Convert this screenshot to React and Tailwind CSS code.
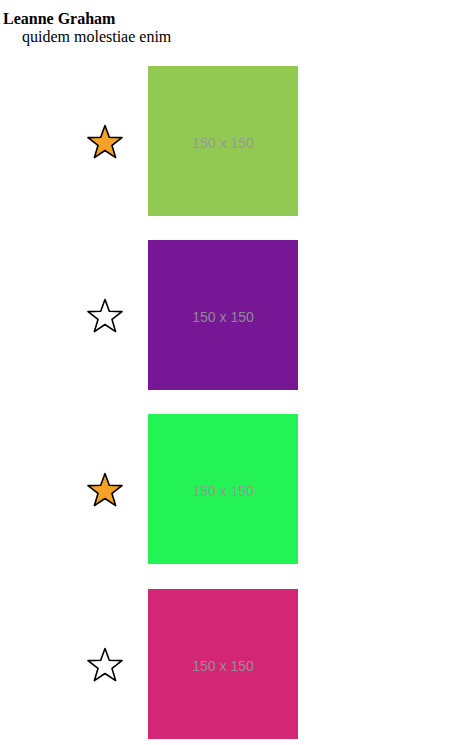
import React from "react";

const items = [
  { color: "bg-[#92c952]", fav: true },
  { color: "bg-[#771796]", fav: false },
  { color: "bg-[#24f355]", fav: true },
  { color: "bg-[#d32776]", fav: false },
];

function Star({ filled }) {
  return (
    <svg width="38" height="36" viewBox="0 0 38 36" className="block">
      <polygon
        points="19,1.5 23.3,13.2 36,13.6 26,21.4 29.6,33.6 19,26.5 8.4,33.6 12,21.4 2,13.6 14.7,13.2"
        fill={filled ? "#f6a128" : "#ffffff"}
        stroke="#000"
        strokeWidth="1.6"
        strokeLinejoin="round"
      />
    </svg>
  );
}

export default function App() {
  return (
    <div className="bg-white min-h-[745px] font-['Liberation_Serif',serif] text-black">
      <div className="pt-[10px] pl-[3px]">
        <div className="font-bold text-[16px] leading-[18px]">Leanne Graham</div>
        <div className="text-[16px] leading-[18px] pl-[19px]">quidem molestiae enim</div>
      </div>
      <div className="flex flex-col gap-[24px] pt-[20px]">
        {items.map((it, i) => (
          <div key={i} className={`flex items-center ${i === 3 ? "mt-[1px]" : ""}`}>
            <div className="w-[148px] flex justify-end pr-[24px] pt-[2px]">
              <Star filled={it.fav} />
            </div>
            <div
              className={`w-[150px] h-[150px] ${it.color} flex items-center justify-center pt-[4px] font-['Liberation_Sans',sans-serif] text-[14px] text-[rgba(150,150,150,0.9)]`}
            >
              150 x 150
            </div>
          </div>
        ))}
      </div>
    </div>
  );
}
